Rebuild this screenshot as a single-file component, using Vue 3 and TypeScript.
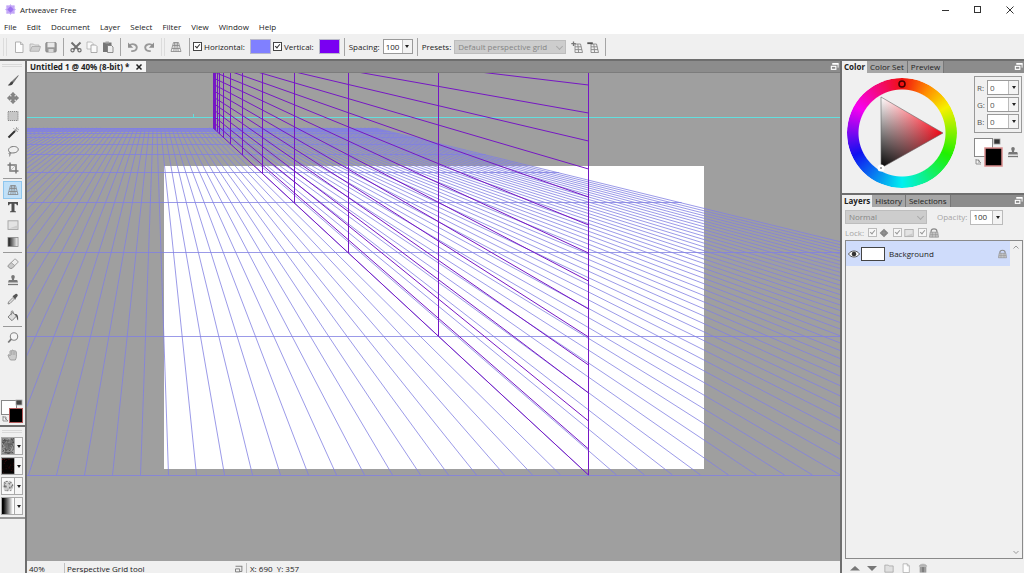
<script setup lang="ts">
import { ref } from 'vue'

interface Line { x1: number; y1: number; x2: number; y2: number }
interface Tool { id: string; label: string }

const menus = ['File', 'Edit', 'Document', 'Layer', 'Select', 'Filter', 'View', 'Window', 'Help']

const fileTools: Tool[][] = [
  [{ id: 'page', label: 'New' }, { id: 'folder', label: 'Open' }, { id: 'save', label: 'Save' }],
  [{ id: 'cut', label: 'Cut' }, { id: 'copy', label: 'Copy' }, { id: 'paste', label: 'Paste' }],
  [{ id: 'undo', label: 'Undo' }, { id: 'redo', label: 'Redo' }],
]

const toolGroups: Tool[][] = [
  [
    { id: 'brush', label: 'Brush' },
    { id: 'move', label: 'Move' },
    { id: 'marquee', label: 'Marquee selection' },
    { id: 'wand', label: 'Magic wand' },
    { id: 'lasso', label: 'Lasso' },
    { id: 'crop', label: 'Crop' },
  ],
  [
    { id: 'grid', label: 'Perspective grid' },
    { id: 'text', label: 'Text' },
    { id: 'shape', label: 'Shape' },
    { id: 'gradient', label: 'Gradient' },
  ],
  [
    { id: 'eraser', label: 'Eraser' },
    { id: 'stamp', label: 'Clone stamp' },
    { id: 'dropper', label: 'Color picker' },
    { id: 'bucket', label: 'Fill' },
  ],
  [
    { id: 'zoom', label: 'Zoom' },
    { id: 'hand', label: 'Hand' },
  ],
]

const activeTool = ref('grid')
const showHorizontal = ref(true)
const showVertical = ref(true)
const spacing = ref('100')
const opacity = ref('100')
const rgb = ref([
  { name: 'R', value: '0' },
  { name: 'G', value: '0' },
  { name: 'B', value: '0' },
])

const gridShape =
  '<path d="M3.5 1.500h5l2.500 9H1z M6 1.500v9 M2.800 4.500h6.400 M2 7.500h8 M4.600 1.500L3.800 10.500 M7.400 1.500L8.200 10.500" fill="none" stroke="#858585" stroke-width=".8"/>'
const stampShape =
  '<path d="M4.200 1.800a1.800 1.800 0 0 1 3.600 0c0 1.300-.8 1.700-.8 3.200h3.200l.8 2.500H1l.8-2.500H5C5 3.500 4.200 3.100 4.200 1.800z" fill="#777"/><path d="M1 9.500h10" stroke="#777" stroke-width="1.300"/>'

const icons: Record<string, string> = {
  page: '<path d="M2.500 1h5l2.500 2.500V11.500h-7.500z" fill="#fdfdfd" stroke="#a8a8a8" stroke-width=".9"/><path d="M7.500 1v2.500H10" fill="none" stroke="#a8a8a8" stroke-width=".8"/>',
  folder: '<path d="M1 10V3h3.500l1 1H10v2" fill="#e2e2e2" stroke="#b0b0b0" stroke-width=".8"/><path d="M1 10.300L3 5.500h8.500L10 10.300z" fill="#d0d0d0" stroke="#a8a8a8" stroke-width=".8"/>',
  save: '<rect x=".8" y="1.500" width="10.400" height="9.500" rx="1" fill="#999" stroke="#808080" stroke-width=".8"/><rect x="2.500" y="1.500" width="7" height="4.800" fill="#e9e9e9"/><rect x="3.500" y="8" width="5" height="3" fill="#d8d8d8"/>',
  cut: '<path d="M1.500 1.500L8.500 8.500M10.500 1.500L3.500 8.500" stroke="#707070" stroke-width="2"/><circle cx="2.500" cy="9.300" r="1.600" fill="none" stroke="#707070" stroke-width="1.200"/><circle cx="9.500" cy="9.300" r="1.600" fill="none" stroke="#707070" stroke-width="1.200"/>',
  copy: '<path d="M1 1h4.500l1.500 1.500V8H1z" fill="#fafafa" stroke="#b0b0b0" stroke-width=".8"/><path d="M5 4h4.500L11 5.500V11.500H5z" fill="#fafafa" stroke="#999" stroke-width=".8"/>',
  paste: '<rect x="1" y="1.500" width="8.500" height="9.500" fill="#757575"/><rect x="3.500" y=".5" width="3.500" height="2" fill="#a5a5a5"/><path d="M5.500 4.500h4l1.500 1.500v5.500H5.500z" fill="#eee" stroke="#777" stroke-width=".8"/>',
  undo: '<path d="M2.500 4.800C4.500 2 10 3 9.800 6.800 9.700 9.300 7 10.400 4.300 10" fill="none" stroke="#999" stroke-width="1.900"/><path d="M1 1.500v5.200h5.200z" fill="#8f8f8f"/>',
  redo: '<path d="M9.500 4.800C7.500 2 2 3 2.200 6.800 2.300 9.300 5 10.400 7.700 10" fill="none" stroke="#999" stroke-width="1.900"/><path d="M11 1.500v5.200H5.800z" fill="#8f8f8f"/>',
  gridadd: '<path d="M4 3h5.500l2 8.500H4z M6.800 3l.8 8.500 M4 5.800h6.200 M4 8.600h7" fill="none" stroke="#888" stroke-width=".9"/><path d="M2.500 .5v4.500M.3 2.700h4.500" stroke="#777" stroke-width="1.300"/>',
  griddel: '<path d="M4 3h5.500l2 8.500H4z M6.800 3l.8 8.500 M4 5.800h6.200 M4 8.600h7" fill="none" stroke="#888" stroke-width=".9"/><path d="M.3 2.200h5.500" stroke="#555" stroke-width="1.800"/>',
  grid: gridShape,
  brush: '<path d="M11.300 .6L5.200 6.200l1.200 1.200z" fill="#777" stroke="#666" stroke-width=".7"/><path d="M5 6.300c-1.800.2-1.600 2.200-4.200 4 2.500.9 5.200-.2 5.500-2.700z" fill="#444"/>',
  move: '<path d="M6 .3l2.400 2.600H7.200v1.900h1.900V3.600L11.700 6 9.100 8.400V7.200H7.200v1.900h1.200L6 11.700 3.600 9.100h1.200V7.200H2.900v1.200L.3 6l2.600-2.400v1.200h1.900V2.900H3.600z" fill="#888" stroke="#666" stroke-width=".5"/>',
  marquee: '<rect x="1" y="1.500" width="10" height="9" fill="#c6c6c6" stroke="#7d7d7d" stroke-width=".9" stroke-dasharray="1.200 .8"/>',
  wand: '<path d="M1.500 10.500L8 4" stroke="#333" stroke-width="2"/><path d="M8 4l1.500-1.500" stroke="#999" stroke-width="2"/><path d="M9.500 .3v1.500M11.800 2.700h-1.300M6.500 1.300l1 1M10.800 5l-.9-.9M11.300 .8l-.8.8" stroke="#777" stroke-width=".8"/>',
  lasso: '<path d="M3.300 7.600C.3 6 1.300 2.500 5 1.700c3.500-.8 6.700.7 6.200 3.200C10.700 7.500 6.500 8.600 3.300 7.600zM3.300 7.600c-1.800 0-1.600 1.600-.3 1.400 1-.2 1.200-1 .3-1.400M2.800 9c.3 1.200 0 2-.8 2.600" fill="none" stroke="#777" stroke-width="1"/>',
  crop: '<path d="M3 .5V9h8.500M.5 3H9v8.500" fill="none" stroke="#777" stroke-width="1.500"/><path d="M3.500 8.500L9 3" stroke="#aaa" stroke-width=".7"/>',
  text: '<path d="M1 1h10v3.200H9.800C9.600 3 9 2.700 7.500 2.700V9.500c0 .7.500.9 1.500.9V11.300H3v-.9c1 0 1.500-.2 1.500-.9V2.700C3 2.700 2.400 3 2.200 4.200H1z" fill="#4f4f4f"/>',
  shape: '<rect x="1" y="1.800" width="10" height="8.600" fill="#e3e3e3" stroke="#a3a3a3" stroke-width=".9"/><path d="M2 9.500L10 6.500v3z" fill="#ccc"/>',
  gradient: '<defs><linearGradient id="toolramp"><stop offset="0" stop-color="#111"/><stop offset="1" stop-color="#fff"/></linearGradient></defs><rect x="1" y="1.500" width="10" height="9" fill="url(#toolramp)" stroke="#888" stroke-width=".8"/>',
  eraser: '<path d="M1.200 7.500L7.300 1.500c.5-.5 1-.5 1.500 0l2 1.700c.4.400.4.900 0 1.300L5 10.300H3.200L1.200 8.800c-.4-.4-.4-.9 0-1.300z" fill="#eee" stroke="#8f8f8f" stroke-width=".9"/><path d="M4.200 4.600L7.800 7.600l-2.800 2.700H3.200L1.200 8.500v-1z" fill="#c9c9c9" stroke="#8f8f8f" stroke-width=".7"/>',
  stamp: stampShape,
  dropper: '<path d="M1 11l.5-2L6 4.500 7.500 6 3 10.500z" fill="#ddd" stroke="#777" stroke-width=".8"/><path d="M5.500 3.200l1-.6L8.600 1c.8-.9 2.800.5 2 2L8.800 5.200l-.3 1.500z" fill="#555"/>',
  bucket: '<path d="M1 7L5.500 2.300 9.500 6 5 10.700z" fill="#ddd" stroke="#777" stroke-width=".9"/><path d="M4.200 5.200V2c0-1.500 2-1.500 2 0v2" fill="none" stroke="#777" stroke-width=".8"/><path d="M7.500 4c3-.2 4 1.700 3.600 6.500C10 9.600 10 8 9.200 6z" fill="#555"/>',
  zoom: '<circle cx="7" cy="4.500" r="3.700" fill="#f4f4f4" stroke="#888" stroke-width="1.100"/><path d="M4.300 7.200L1.200 10.500" stroke="#777" stroke-width="1.800"/>',
  hand: '<path d="M3.500 11C1.800 9 1.500 7.500 1 6c.7-.7 1.500-.2 2 .8V2.300c.3-.8 1.200-.8 1.500 0 0-1.700 1.500-1.700 1.700-.2.300-1 1.500-.8 1.600.3.500-.7 1.500-.4 1.500.6C9.500 6 9.800 8.500 8.300 11z" fill="#ccc" stroke="#999" stroke-width=".9"/><path d="M4.600 2.500V6M6.200 2.300V6M7.800 2.700V6" stroke="#999" stroke-width=".6"/>',
  lock: '<path d="M2.500 5V4c0-4 7-4 7 0v1" fill="none" stroke="#8a8a8a" stroke-width="1.400"/><path d="M1.500 5h9l.9 6H.6z" fill="#c5c5c5" stroke="#8a8a8a" stroke-width=".8"/><path d="M4 5v6M8 5v6M1.500 8h9.300" stroke="#8a8a8a" stroke-width=".6"/>',
  diamond: '<path d="M6 .8L11.200 6 6 11.200.8 6z" fill="#808080"/><path d="M6 2v8M2 6h8" stroke="#9d9d9d" stroke-width=".8"/>',
  up: '<path d="M0 9L6 3.500 12 9z" fill="#777"/>',
  down: '<path d="M0 3.500h12L6 9.500z" fill="#777"/>',
  group: '<path d="M1 2.500h4l1 1h5V11H1z" fill="#e0e0e0" stroke="#a3a3a3" stroke-width=".9"/>',
  trash: '<path d="M2 4.500h8V11.500H2z" fill="#9c9c9c"/><path d="M1.500 4C2 .5 10 .5 10.500 4z" fill="#b5b5b5" stroke="#999" stroke-width=".6"/><path d="M6 5v6" stroke="#555" stroke-width="1"/>',
  dock: '<path d="M3 2.500h8.500" stroke="#fff" stroke-width="2.400"/><path d="M10.800 3v4.500" stroke="#fff" stroke-width="1.200"/><rect x="1.800" y="5.800" width="6" height="4" fill="none" stroke="#fff" stroke-width="1.500"/>',
}

/* Perspective grid: row distances shrink by a constant factor toward the far edge. */
const FLOOR_Y = 475
const FAR_Y = 128
const WALL_X = 588.5
const FAR_X = 213.5
const STEP = 28
const SHRINK = 0.6
const floorVanish = { x: 155, y: 74 }
const wallVanish = { x: 104, y: 27 }
const lastColumn = WALL_X + 43 * STEP

const floorLines: Line[] = []
const farRatio = (FAR_Y - floorVanish.y) / (FLOOR_Y - floorVanish.y)
for (let n = -58; n <= 43; n++) {
  const x = WALL_X + n * STEP
  floorLines.push({ x1: x, y1: FLOOR_Y, x2: floorVanish.x + (x - floorVanish.x) * farRatio, y2: FAR_Y })
}

const floorRows: Line[] = []
const wallColumns: Line[] = []
for (let i = 0, f = 1; i < 16; i++, f *= SHRINK) {
  const y = FAR_Y + (FLOOR_Y - FAR_Y) * f
  const right = floorVanish.x + ((lastColumn - floorVanish.x) * (y - floorVanish.y)) / (FLOOR_Y - floorVanish.y)
  const row = Math.floor(y) + 0.5
  floorRows.push({ x1: -900, y1: row, x2: right, y2: row })
  const x = Math.floor(FAR_X + (WALL_X - FAR_X) * f) + 0.5
  wallColumns.push({ x1: x, y1: -60, x2: x, y2: y })
}

const wallRatio = (FAR_X - wallVanish.x) / (WALL_X - wallVanish.x)
const wallLine = (y: number): Line => ({
  x1: WALL_X,
  y1: y,
  x2: FAR_X,
  y2: wallVanish.y + (y - wallVanish.y) * wallRatio,
})
const wallTop = 85
const wallLines: Line[] = [wallLine(FLOOR_Y)]
for (let k = -3; k < 14; k++) wallLines.push(wallLine(wallTop + k * STEP))

/* Small deterministic speckle for the texture swatches. */
function speckle(seed: number, count: number) {
  let s = seed
  const next = () => (s = (s * 16807) % 2147483647) / 2147483647
  return Array.from({ length: count }, () => ({ x: Math.floor(next() * 13), y: Math.floor(next() * 17), o: next() }))
}
const paper = speckle(71, 150)
const pattern = speckle(913, 34)
const nozzle = speckle(37, 110).filter(d => (d.x - 6) ** 2 + (d.y - 8) ** 2 < 36)
</script>

<template>
  <div class="app">
    <header class="titlebar">
      <svg class="logo" viewBox="0 0 12 12" aria-hidden="true">
        <rect x="1" y="1" width="10" height="10" rx="2" fill="#d9c9fb" />
        <path d="M6 0l1.500 2.500L10.500 1.500 9.500 4.500 12 6 9.500 7.500l1 3-3-1L6 12 4.500 9.500l-3 1 1-3L0 6l2.500-1.500-1-3 3 1z" fill="#c3a6f6" />
        <path d="M6 2.500L9.500 6 6 9.500 2.500 6z" fill="#9c73ee" />
      </svg>
      <h1>Artweaver Free</h1>
      <div class="window-buttons">
        <button aria-label="Minimize"><svg viewBox="0 0 10 10"><path d="M1 5.500h7" /></svg></button>
        <button aria-label="Maximize"><svg viewBox="0 0 10 10"><rect x="1.500" y="1.500" width="6" height="6" /></svg></button>
        <button aria-label="Close"><svg viewBox="0 0 10 10"><path d="M1.500 1.500l7 7M8.500 1.500l-7 7" /></svg></button>
      </div>
    </header>

    <nav class="menubar">
      <button v-for="m in menus" :key="m">{{ m }}</button>
    </nav>

    <div class="toolbar">
      <span class="grip"></span>
      <template v-for="(g, i) in fileTools" :key="i">
        <div class="tool-set">
          <button v-for="t in g" :key="t.id" :aria-label="t.label"><svg viewBox="0 0 12 12" v-html="icons[t.id]"></svg></button>
        </div>
        <span :class="i < 2 ? 'sep' : 'grip late'"></span>
      </template>
      <button class="grid-btn" aria-label="Perspective grid"><svg viewBox="0 0 12 12" v-html="icons.grid"></svg></button>
      <span class="sep"></span>
      <label class="check"><input v-model="showHorizontal" type="checkbox" /><span>Horizontal:</span></label>
      <button class="swatch blue" aria-label="Horizontal color"></button>
      <label class="check"><input v-model="showVertical" type="checkbox" /><span>Vertical:</span></label>
      <button class="swatch violet" aria-label="Vertical color"></button>
      <span class="sep"></span>
      <label class="caption" for="spacing">Spacing:</label>
      <span class="spin"><input id="spacing" v-model="spacing" type="text" /><button aria-label="Adjust spacing"></button></span>
      <span class="sep"></span>
      <label class="caption" for="presets">Presets:</label>
      <span class="combo presets">
        <select id="presets" disabled><option>Default perspective grid</option></select>
      </span>
      <div class="tool-set">
        <button aria-label="Add preset"><svg viewBox="0 0 12 12" v-html="icons.gridadd"></svg></button>
        <button aria-label="Delete preset"><svg viewBox="0 0 12 12" v-html="icons.griddel"></svg></button>
      </div>
      <span class="sep"></span>
    </div>

    <div class="workspace">
      <aside class="toolbox">
        <span class="hgrip"></span>
        <div v-for="(g, i) in toolGroups" :key="i" class="group">
          <button
            v-for="t in g"
            :key="t.id"
            :aria-label="t.label"
            :class="{ active: activeTool === t.id }"
            @click="activeTool = t.id"
          >
            <svg viewBox="0 0 12 12" v-html="icons[t.id]"></svg>
          </button>
        </div>
        <div class="colors small">
          <svg viewBox="0 0 24 26" aria-hidden="true">
            <rect x="1.500" y="1.500" width="15" height="14" fill="#fff" stroke="#888" />
            <rect x="16" y="1" width="6" height="5" fill="#444" stroke="#aaa" stroke-width=".8" />
            <path d="M3 17v5h5M5 19l3 3M3 18h3v3" fill="none" stroke="#888" stroke-width=".9" />
            <rect x="9.500" y="9.500" width="13" height="14" fill="#000" stroke="#b35a5a" />
          </svg>
        </div>
        <div class="samples">
          <span class="hgrip"></span>
          <button aria-label="Paper texture">
            <svg viewBox="0 0 13 17"><rect width="13" height="17" fill="#777" /><rect v-for="(d, i) in paper" :key="i" :x="d.x" :y="d.y" width="1" height="1" :fill="d.o > 0.5 ? '#a8a8a8' : '#4c4c4c'" /></svg>
            <i></i>
          </button>
          <button aria-label="Pattern">
            <svg viewBox="0 0 13 17"><rect width="13" height="17" fill="#050303" /><rect v-for="(d, i) in pattern" :key="i" :x="d.x" :y="d.y" width="1" height="1" fill="#6b1515" :opacity="d.o * 0.7" /></svg>
            <i></i>
          </button>
          <button aria-label="Nozzle">
            <svg viewBox="0 0 13 17"><rect width="13" height="17" fill="#fafafa" /><circle cx="6.500" cy="8.500" r="5.800" fill="#ccc" /><rect v-for="(d, i) in nozzle" :key="i" :x="d.x" :y="d.y" width="1" height="1" :fill="d.o > 0.4 ? '#555' : '#eee'" /></svg>
            <i></i>
          </button>
          <button aria-label="Gradient">
            <span class="ramp"></span>
            <i></i>
          </button>
        </div>
      </aside>

      <main class="document">
        <div class="tabs">
          <div class="tab current"><span>Untitled 1 @ 40% (8-bit) *</span><button class="close" aria-label="Close document"><svg viewBox="0 0 8 8"><path d="M1.500 1.500l5 5M6.500 1.500l-5 5" /></svg></button></div>
          <button class="dock" aria-label="Document list"><svg viewBox="0 0 12 12" v-html="icons.dock"></svg></button>
        </div>
        <svg class="canvas" role="img" aria-label="Canvas with perspective grid">
          <g transform="translate(-27 -73)">
            <rect x="164" y="166" width="540" height="303" fill="#fff" />
            <line class="horizon" x1="0" y1="117.500" x2="3000" y2="117.500" />
            <line class="horizon" x1="193.500" y1="114" x2="193.500" y2="117" />
            <g v-if="showHorizontal" class="floor">
              <line v-for="(l, i) in floorLines" :key="i" :x1="l.x1" :y1="l.y1" :x2="l.x2" :y2="l.y2" />
              <line v-for="(l, i) in floorRows" :key="'r' + i" :x1="l.x1" :y1="l.y1" :x2="l.x2" :y2="l.y2" />
            </g>
            <g v-if="showVertical" class="wall">
              <line v-for="(l, i) in wallLines" :key="i" :x1="l.x1" :y1="l.y1" :x2="l.x2" :y2="l.y2" />
              <line v-for="(l, i) in wallColumns" :key="'c' + i" :x1="l.x1" :y1="l.y1" :x2="l.x2" :y2="l.y2" />
            </g>
          </g>
        </svg>
        <footer class="status">
          <span class="zoom">40%</span>
          <span class="hint">Perspective Grid tool</span>
          <svg viewBox="0 0 12 12" aria-hidden="true"><path d="M2 3h9M10.500 3v7H7.500M2 6.500h5.500v4H2z" fill="none" stroke="#777" stroke-width="1.200" /></svg>
          <span class="coords">X: 690&nbsp; Y: 357</span>
        </footer>
      </main>

      <aside class="panels">
        <section class="panel">
          <div class="tabs">
            <button class="tab current">Color</button>
            <button class="tab">Color Set</button>
            <button class="tab">Preview</button>
            <button class="dock" aria-label="Color panel menu"><svg viewBox="0 0 12 12" v-html="icons.dock"></svg></button>
          </div>
          <div class="color-body">
            <div class="wheel">
              <svg viewBox="0 0 110 110" aria-hidden="true">
                <defs>
                  <linearGradient id="shade" gradientUnits="userSpaceOnUse" x1="34" y1="90" x2="65" y2="37">
                    <stop offset="0" stop-color="#000" /><stop offset="1" stop-color="#000" stop-opacity="0" />
                  </linearGradient>
                  <linearGradient id="tint" gradientUnits="userSpaceOnUse" x1="34" y1="0" x2="96" y2="0">
                    <stop offset="0" stop-color="#fff" /><stop offset="1" stop-color="#f00010" />
                  </linearGradient>
                </defs>
                <path d="M34 19L96 55 34 90z" fill="url(#tint)" />
                <path d="M34 19L96 55 34 90z" fill="url(#shade)" stroke="#666" stroke-width=".6" />
                <circle cx="55" cy="6" r="3" fill="none" stroke="#400" stroke-width="1.600" />
                <circle cx="34" cy="90" r="3.500" fill="#fff" />
                <circle cx="34" cy="90" r="1" fill="#888" />
              </svg>
            </div>
            <div class="color-side">
              <div class="rgb">
                <label v-for="c in rgb" :key="c.name"><span>{{ c.name }}:</span><span class="spin"><input v-model="c.value" type="text" /><button :aria-label="'Adjust ' + c.name"></button></span></label>
              </div>
              <div class="side-row">
                <div class="colors">
                  <svg viewBox="0 0 30 30" aria-hidden="true">
                    <rect x=".5" y=".5" width="18" height="18" fill="#fff" stroke="#888" />
                    <rect x="20" y="1" width="6" height="5" fill="#333" stroke="#999" stroke-width=".8" />
                    <path d="M2 21v5h5M4 22l3 3M2 22h3v3" fill="none" stroke="#888" stroke-width=".9" />
                    <rect x="11" y="10" width="17" height="18" fill="#000" stroke="#d98c8c" stroke-width="1.500" />
                  </svg>
                </div>
                <button class="stamp" aria-label="Clone color"><svg viewBox="0 0 12 12" v-html="icons.stamp"></svg></button>
              </div>
            </div>
          </div>
        </section>

        <section class="panel layers">
          <div class="tabs">
            <button class="tab current">Layers</button>
            <button class="tab">History</button>
            <button class="tab">Selections</button>
            <button class="dock" aria-label="Layers panel menu"><svg viewBox="0 0 12 12" v-html="icons.dock"></svg></button>
          </div>
          <div class="blend">
            <span class="combo mode"><select aria-label="Blend mode" disabled><option>Normal</option></select></span>
            <label for="opacity">Opacity:</label>
            <span class="spin"><input id="opacity" v-model="opacity" type="text" /><button aria-label="Adjust opacity"></button></span>
          </div>
          <div class="locks">
            <span>Lock:</span>
            <label><input type="checkbox" checked disabled aria-label="Lock position" /><svg viewBox="0 0 12 12" v-html="icons.diamond"></svg></label>
            <label><input type="checkbox" checked disabled aria-label="Lock transparency" /><svg viewBox="0 0 12 12" v-html="icons.shape"></svg></label>
            <label><input type="checkbox" checked disabled aria-label="Lock all" /><svg viewBox="0 0 12 12" v-html="icons.lock"></svg></label>
          </div>
          <div class="list">
            <div class="rows">
              <div class="layer">
                <button class="eye" aria-label="Toggle visibility">
                  <svg viewBox="0 0 12 10"><path d="M.5 5C3 1 9 1 11.500 5 9 9 3 9 .5 5z" fill="#fff" stroke="#555" /><circle cx="6" cy="5" r="2.300" fill="#333" /></svg>
                </button>
                <span class="thumb"></span>
                <span class="name">Background</span>
                <svg class="lock" viewBox="0 0 12 12" v-html="icons.lock"></svg>
              </div>
            </div>
            <div class="scroll">
              <svg viewBox="0 0 8 8"><path d="M1.500 5.500L4 3l2.500 2.500" /></svg>
              <svg viewBox="0 0 8 8"><path d="M1.500 3L4 5.500 6.500 3" /></svg>
            </div>
          </div>
          <div class="actions">
            <button aria-label="Move layer up"><svg viewBox="0 0 12 12" v-html="icons.up"></svg></button>
            <button aria-label="Move layer down"><svg viewBox="0 0 12 12" v-html="icons.down"></svg></button>
            <button aria-label="New group"><svg viewBox="0 0 12 12" v-html="icons.group"></svg></button>
            <button aria-label="New layer"><svg viewBox="0 0 12 12" v-html="icons.page"></svg></button>
            <button aria-label="Delete layer"><svg viewBox="0 0 12 12" v-html="icons.trash"></svg></button>
          </div>
        </section>
      </aside>
    </div>
  </div>
</template>

<style>
html, body, #app { height: 100%; }
body { overflow: hidden; }
</style>

<style scoped>
.app {
  display: flex;
  flex-direction: column;
  height: 100%;
  background: #f0f0f0;
  color: #222;
  font: 8px/12px "Open Sans", "Noto Sans", sans-serif;
}
.app *, .app *::before { box-sizing: border-box; }
button {
  display: flex;
  align-items: center;
  justify-content: center;
  margin: 0;
  padding: 0;
  border: 0;
  background: none;
  color: inherit;
  font: inherit;
}
input, select { font: inherit; color: inherit; margin: 0; }
svg { display: block; flex: none; }

.titlebar { display: flex; align-items: center; height: 19px; padding-left: 5px; background: #fff; }
.logo { width: 11px; height: 11px; margin-right: 4px; }
.titlebar h1 { margin: 0; font-size: 8px; font-weight: 400; }
.window-buttons { display: flex; margin-left: auto; }
.window-buttons button { width: 32px; height: 18px; padding-left: 4px; }
.window-buttons svg { width: 10px; height: 10px; fill: none; stroke: #333; }

.menubar { display: flex; gap: 10px; height: 15px; padding: 1px 4px 0; background: #fff; }
.menubar button { height: 14px; }

.toolbar {
  display: flex;
  align-items: center;
  height: 27px;
  flex: none;
  border-bottom: 2px solid #6e6e6e;
}
.toolbar svg { width: 12px; height: 12px; }
.grip {
  width: 4px;
  height: 18px;
  margin: 0 4px 0 3px;
  border: solid #dcdcdc;
  border-width: 0 1px;
}
.grip.late { margin: 0 4px; }
.sep { width: 1px; height: 18px; margin: 0 4px; background: #a5a5a5; }
.tool-set { display: flex; }
.tool-set button { width: 16px; height: 18px; }
.grid-btn { width: 14px; height: 18px; margin-right: 2px; }
.check { display: flex; align-items: center; gap: 2px; margin-left: -1px; }
.check + .swatch { margin-left: 5px; }
input[type="checkbox"] {
  appearance: none;
  width: 9px;
  height: 9px;
  border: 1px solid #444;
  background: #fff;
}
input[type="checkbox"]:checked::before {
  content: "";
  display: block;
  width: 3px;
  height: 5px;
  margin: 0 0 0 2px;
  border: solid #333;
  border-width: 0 1px 1px 0;
  transform: rotate(40deg);
}
.swatch { width: 21px; height: 15px; margin-right: 3px; border: 1px solid #b9b9c9; }
.blue { background: #8080ff; }
.violet { background: #7a00f2; }
.violet + .sep { margin-left: 1px; }
.caption { margin-right: 3px; }

.spin { display: flex; width: 30px; height: 15px; border: 1px solid #9a9a9a; background: #fff; }
.spin input { flex: 1; min-width: 0; padding: 0 2px; border: 0; background: none; }
.spin button { width: 10px; border-left: 1px solid #bbb; background: #f3f3f3; }
.spin button::before, .samples i::before {
  content: "";
  border: solid transparent;
  border-width: 3px 2px 0;
  border-top-color: #222;
}
.combo { display: flex; position: relative; height: 14px; background: #cdcdcd; color: #858585; }
.combo select {
  appearance: none;
  width: 100%;
  padding: 0 3px;
  border: 1px solid #bdbdbd;
  background: none;
  opacity: 1;
}
.combo::after {
  content: "";
  position: absolute;
  right: 4px;
  top: 4px;
  width: 4px;
  height: 4px;
  border: solid #aaa;
  border-width: 0 1px 1px 0;
  transform: rotate(45deg);
}
.presets { width: 112px; margin-right: 3px; }

.workspace { display: flex; flex: 1; min-height: 0; }
.toolbox { display: flex; flex-direction: column; width: 27px; border-right: 2px solid #6e6e6e; }
.hgrip {
  display: block;
  width: 20px;
  height: 3px;
  margin: 3px 2px 5px;
  border: solid #d9d9d9;
  border-width: 1px 0;
}
.group { display: grid; height: 70px; grid-auto-rows: 1fr; padding: 0 3px; }
.group:nth-of-type(1) { height: 105px; }
.group:nth-of-type(4) { height: 35px; }
.group + .group { margin-top: 4px; position: relative; }
.group + .group::before {
  content: "";
  position: absolute;
  left: 3px;
  right: 3px;
  top: -3px;
  height: 1px;
  background: #999;
}
.group svg { width: 12px; height: 12px; }
.group .active { border: 1px solid #8fc6ee; background: #c0e0f8; }
.colors svg { width: 30px; height: 30px; }
.colors.small { margin-top: 35px; border-bottom: 2px solid #6e6e6e; }
.colors.small svg { width: 24px; height: 26px; }
.samples { padding-bottom: 2px; border-bottom: 2px solid #999; }
.samples .hgrip { margin: 3px 2px 4px; }
.samples button { width: 22px; height: 18px; margin: 0 1px 2px; border: 1px solid #aaa; }
.samples button:last-child { margin-bottom: 0; }
.samples svg, .ramp { width: 12px; height: 16px; }
.samples i { display: flex; flex: 1; height: 16px; align-items: center; justify-content: center; border-left: 1px solid #aaa; background: #f6f6f6; }
.ramp { background: linear-gradient(90deg, #000 10%, #fff 90%); }

.document { display: flex; flex: 1; flex-direction: column; min-width: 0; background: #9f9f9f; }
.tabs { display: flex; height: 12px; flex: none; background: #8c8c8c; }
.document .tabs { border-bottom: 1px solid #7c7c7c; }
.tab { display: flex; align-items: center; height: 12px; }
.document .tab { padding: 0 3px; gap: 6px; height: 11px; background: #f4f4f4; font-weight: 700; }
.close svg { width: 8px; height: 8px; stroke: #222; stroke-width: 1.5; }
.dock { width: 12px; height: 11px; margin-left: auto; }
.dock svg { width: 9px; height: 9px; }
.canvas { flex: 1; width: 100%; min-height: 0; overflow: hidden; }
.horizon { stroke: #62dede; stroke-width: 1px; }
.floor { stroke: #8280e2; stroke-width: 0.8px; }
.wall { stroke: #7617c4; stroke-width: 1px; }
.status { display: flex; height: 12px; flex: none; padding-top: 2px; background: #f0f0f0; line-height: 12px; }
.status span { white-space: nowrap; }
.zoom { width: 38px; padding-left: 2px; border-right: 1px solid #c0c0c0; }
.hint { width: 169px; padding-left: 2px; }
.status svg { width: 9px; height: 9px; margin: 1px 3px 0 0; }
.coords { padding-left: 3px; border-left: 1px solid #c0c0c0; }

.panels { display: flex; flex-direction: column; width: 184px; flex: none; border-left: 2px solid #6e6e6e; }
.panel .tab { padding: 0 3px; border-right: 1px solid #777; background: #a6a6a6; }
.panel .tab.current { padding: 0 2px; border: 0; background: #f0f0f0; font-weight: 700; }
.color-body { display: flex; height: 120px; padding: 5px 2px 0 5px; }
.wheel { position: relative; width: 110px; height: 110px; }
.wheel::before {
  content: "";
  position: absolute;
  inset: 0;
  border-radius: 50%;
  background: conic-gradient(#f01010, #ff8a00 30deg, #f6f000 60deg, #20f000 115deg, #00f0f0 180deg, #1010f0 245deg, #f800f0 300deg, #f01010);
  mask: radial-gradient(circle, transparent 43px, #000 44px);
}
.wheel svg { position: relative; width: 110px; height: 110px; }
.color-side { margin: -2px 0 0 auto; width: 48px; }
.rgb { display: grid; gap: 2px; padding: 3px 2px; border: 1px solid #999; }
.rgb label { display: flex; justify-content: space-between; align-items: center; color: #555; }
.rgb .spin { width: 32px; }
.side-row { display: flex; gap: 3px; margin-top: 5px; }
.stamp { height: 30px; }
.stamp svg { width: 12px; height: 12px; }

.layers { display: flex; flex: 1; flex-direction: column; min-height: 0; border-top: 2px solid #6e6e6e; }
.blend { display: flex; align-items: center; height: 19px; padding: 1px 3px 0; color: #a5a5a5; }
.mode { width: 82px; }
.blend label { margin: 0 3px 0 10px; }
.blend .spin { width: 33px; color: #333; border-color: #bbb; }
.locks { display: flex; align-items: center; gap: 4px; height: 14px; padding: 0 3px; color: #a5a5a5; }
.locks label { display: flex; gap: 2px; }
.locks svg { width: 10px; height: 10px; }
.locks input[type="checkbox"] { border-color: #bbb; background: #f7f7f7; }
.locks input[type="checkbox"]::before { border-color: #999; }
.list { display: flex; flex: 1; min-height: 0; margin: 0 1px 0 3px; border: 1px solid #8a8a8a; }
.rows { flex: 1; }
.layer { display: flex; align-items: center; height: 25px; padding: 0 3px 0 2px; background: #cfdcfb; }
.eye svg { width: 12px; height: 10px; }
.thumb { width: 24px; height: 14px; margin: 0 4px 0 1px; border: 1px solid #444; background: #fff; }
.lock { width: 9px; height: 10px; margin-left: auto; }
.scroll { display: flex; flex-direction: column; justify-content: space-between; align-items: center; width: 12px; padding: 2px 0; }
.scroll svg { width: 8px; height: 8px; fill: none; stroke: #999; }
.actions { display: flex; gap: 7px; height: 14px; padding: 4px 8px 0; overflow: hidden; }
.actions svg { width: 10px; height: 10px; }
</style>
